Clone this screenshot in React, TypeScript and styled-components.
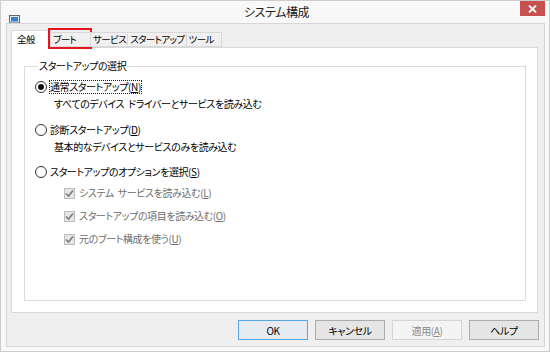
import React from "react";
import styled, { createGlobalStyle } from "styled-components";

const GlobalStyle = createGlobalStyle`
  html, body { margin: 0; padding: 0; background: #ffffff; }
  body {
    font-family: "Noto Sans CJK JP", "Noto Sans", sans-serif;
    font-feature-settings: "palt";
    -webkit-font-smoothing: antialiased;
  }
`;

const Window = styled.div`
  width: 550px;
  height: 352px;
  box-sizing: border-box;
  border: 1px solid #cdcdcd;
  background: #f8f8f8;
  display: flex;
  flex-direction: column;
`;

const TitleBar = styled.div`
  height: 22px;
  display: grid;
  grid-template-columns: 1fr auto 1fr;
  align-items: start;
`;

const AppIcon = styled.div`
  margin: 6px 0 0 8px;
  width: 11px;
  height: 11px;
`;

const Title = styled.div`
  font-size: 12px;
  letter-spacing: -0.4px;
  line-height: 22px;
  color: #222;
  padding-left: 3px;
`;

const CloseButton = styled.div`
  justify-self: end;
  margin: 0 4px 0 0;
  width: 25px;
  height: 15px;
  background: #c75050;
  display: flex;
  align-items: center;
  justify-content: center;
`;

const Client = styled.div`
  flex: 1;
  margin: 0 4px 4px 5px;
  border: 1px solid #d6d6d6;
  background: #efefef;
  padding: 6px 6px 6px 4px;
  display: flex;
  flex-direction: column;
`;

const TabStrip = styled.div`
  display: flex;
  align-items: flex-end;
  height: 17px;
  position: relative;
  z-index: 1;
`;

const Tab = styled.div<{ $w: number; $active?: boolean }>`
  position: relative;
  box-sizing: border-box;
  min-width: ${(p) => p.$w}px;
  height: ${(p) => (p.$active ? 18 : 15)}px;
  margin-bottom: ${(p) => (p.$active ? -1 : 0)}px;
  border: 1px solid #d9d9d9;
  border-bottom: ${(p) => (p.$active ? "none" : "1px solid #d9d9d9")};
  margin-left: ${(p) => (p.$active ? 0 : -1)}px;
  background: ${(p) => (p.$active ? "#ffffff" : "#f0f0f0")};
  font-size: 9.5px;
  letter-spacing: -0.6px;
  line-height: ${(p) => (p.$active ? 17 : 13)}px;
  padding: 0 1px 0 ${(p) => (p.$active ? 5 : 2)}px;
  color: #000;
  white-space: nowrap;
  &:first-child { margin-left: 0; }
`;

const Highlight = styled.div`
  position: absolute;
  left: -3px;
  right: -2px;
  top: -5px;
  bottom: -3px;
  border: 2px solid #e5141e;
  pointer-events: none;
`;

const Panel = styled.div`
  box-sizing: border-box;
  height: 266px;
  border: 1px solid #d9d9d9;
  background: #ffffff;
  padding: 10px 11px 0 12px;
`;

const GroupBox = styled.fieldset`
  margin: 0;
  box-sizing: border-box;
  height: 243px;
  border: 1px solid #dcdcdc;
  padding: 2px 0 0 10px;
  display: flex;
  flex-direction: column;
`;

const Legend = styled.legend`
  font-size: 10px;
  letter-spacing: -0.4px;
  line-height: 16px;
  padding: 0 1px;
  margin-left: 3px;
  color: #000;
`;

const OptionRow = styled.div<{ $top: number; $indent?: number; $disabled?: boolean }>`
  display: flex;
  align-items: center;
  height: 16px;
  margin-top: ${(p) => p.$top}px;
  padding-left: ${(p) => p.$indent ?? 0}px;
  font-size: 10px;
  letter-spacing: -0.4px;
  color: ${(p) => (p.$disabled ? "#6d6d6d" : "#000")};
  white-space: pre;
`;

const Radio = styled.span<{ $checked?: boolean }>`
  box-sizing: border-box;
  width: 12px;
  height: 12px;
  border-radius: 50%;
  border: 1px solid #333;
  background: #fff;
  margin-right: 2px;
  display: flex;
  align-items: center;
  justify-content: center;
  &::after {
    content: "";
    display: ${(p) => (p.$checked ? "block" : "none")};
    width: 6px;
    height: 6px;
    border-radius: 50%;
    background: #111;
  }
`;

const CheckBox = styled.span`
  box-sizing: border-box;
  width: 11px;
  height: 11px;
  border: 1px solid #bcbcbc;
  background: #e6e6e6;
  margin-right: 3px;
  display: flex;
  align-items: center;
  justify-content: center;
`;

const Label = styled.span<{ $focus?: boolean }>`
  padding: 0 1px;
  outline: ${(p) => (p.$focus ? "1px dotted #222" : "none")};
  outline-offset: -1px;
  line-height: 14px;
`;

const Mn = styled.span`
  text-decoration: underline;
  text-underline-offset: 1px;
`;

const Gap = styled.span`
  display: inline-block;
  width: 4px;
`;

const ButtonRow = styled.div`
  display: flex;
  justify-content: flex-end;
  gap: 7px;
  margin-top: 7px;
  margin-right: -1px;
`;

const Button = styled.div<{ $default?: boolean; $disabled?: boolean }>`
  box-sizing: border-box;
  width: 70px;
  height: 20px;
  border: 1px solid ${(p) => (p.$default ? "#5aa7e6" : p.$disabled ? "#d5d5d5" : "#acacac")};
  background: ${(p) => (p.$disabled ? "#f4f4f4" : p.$default ? "#e5ebf1" : "#e5e5e5")};
  color: ${(p) => (p.$disabled ? "#8a8a8a" : "#000")};
  font-size: 10px;
  letter-spacing: -0.4px;
  display: flex;
  align-items: center;
  justify-content: center;
`;

const Check = () => (
  <svg width="9" height="9" viewBox="0 0 9 9">
    <path d="M1 4.5 L3.5 7 L8 1.5" fill="none" stroke="#7a7a7a" strokeWidth="1.6" />
  </svg>
);

const MonitorIcon = () => (
  <svg width="11" height="11" viewBox="0 0 11 11">
    <rect x="0.5" y="0.5" width="10" height="7.5" fill="#dfe6ee" stroke="#5a6a7c" />
    <rect x="2" y="2" width="7" height="4.5" fill="#3b7fd0" />
    <rect x="3" y="8.5" width="5" height="2" fill="#7d8a98" />
  </svg>
);

export default function App() {
  return (
    <>
      <GlobalStyle />
      <Window>
        <TitleBar>
          <AppIcon>
            <MonitorIcon />
          </AppIcon>
          <Title>システム構成</Title>
          <CloseButton>
            <svg width="9" height="8" viewBox="0 0 9 8">
              <path d="M1 0.5 L8 7.5 M8 0.5 L1 7.5" stroke="#fff" strokeWidth="1.8" />
            </svg>
          </CloseButton>
        </TitleBar>
        <Client>
          <TabStrip>
            <Tab $w={40} $active>全般</Tab>
            <Tab $w={41}>
              ブート
              <Highlight />
            </Tab>
            <Tab $w={36}>サービス</Tab>
            <Tab $w={56}>スタートアップ</Tab>
            <Tab $w={36}>ツール</Tab>
          </TabStrip>
          <Panel>
            <GroupBox>
              <Legend>スタートアップの選択</Legend>
              <OptionRow $top={3}>
                <Radio $checked />
                <Label $focus>
                  通常スタートアップ(<Mn>N</Mn>)
                </Label>
              </OptionRow>
              <OptionRow $top={0} $indent={19}>
                すべてのデバイス<Gap />ドライバーとサービスを読み込む
              </OptionRow>
              <OptionRow $top={11}>
                <Radio />
                <Label>
                  診断スタートアップ(<Mn>D</Mn>)
                </Label>
              </OptionRow>
              <OptionRow $top={0} $indent={19}>
                基本的なデバイスとサービスのみを読み込む
              </OptionRow>
              <OptionRow $top={10}>
                <Radio />
                <Label>
                  スタートアップのオプションを選択(<Mn>S</Mn>)
                </Label>
              </OptionRow>
              <OptionRow $top={5} $indent={29} $disabled>
                <CheckBox>
                  <Check />
                </CheckBox>
                <Label>
                  システム<Gap />サービスを読み込む(<Mn>L</Mn>)
                </Label>
              </OptionRow>
              <OptionRow $top={7} $indent={29} $disabled>
                <CheckBox>
                  <Check />
                </CheckBox>
                <Label>
                  スタートアップの項目を読み込む(<Mn>O</Mn>)
                </Label>
              </OptionRow>
              <OptionRow $top={7} $indent={29} $disabled>
                <CheckBox>
                  <Check />
                </CheckBox>
                <Label>
                  元のブート構成を使う(<Mn>U</Mn>)
                </Label>
              </OptionRow>
            </GroupBox>
          </Panel>
          <ButtonRow>
            <Button $default>OK</Button>
            <Button>キャンセル</Button>
            <Button $disabled>
              適用(<Mn>A</Mn>)
            </Button>
            <Button>ヘルプ</Button>
          </ButtonRow>
        </Client>
      </Window>
    </>
  );
}
